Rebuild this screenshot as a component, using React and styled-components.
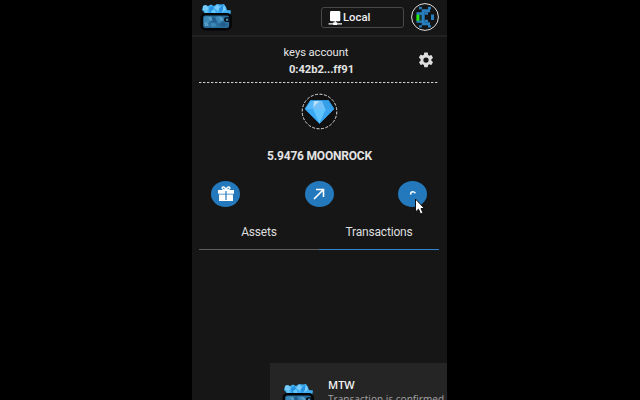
import React from 'react';
import styled, { createGlobalStyle } from 'styled-components';

const GlobalStyle = createGlobalStyle`
  * { box-sizing: border-box; }
  body { margin: 0; background: #000; overflow: hidden; }
`;

const Screen = styled.div`
  position: relative;
  width: 640px;
  height: 400px;
  overflow: hidden;
  background: #000;
  padding-left: 192px;
  font-family: Roboto, sans-serif;
  color: #e4e4e4;
`;

const Panel = styled.main`
  width: 255px;
  height: 400px;
  background: #161616;
  display: flex;
  flex-direction: column;
`;

const Header = styled.header`
  display: flex;
  align-items: center;
  height: 37px;
  padding: 0 8px 2px 7px;
  border-bottom: 2px solid #222;
`;

const NetworkSelect = styled.button`
  display: flex;
  align-items: center;
  width: 83px;
  height: 21px;
  margin: 1px 7px 0 auto;
  padding: 0 0 0 6px;
  border: 1px solid #484848;
  border-radius: 3px;
  background: transparent;
  color: #eee;
  font: 500 11.3px Roboto, sans-serif;
  gap: 0;
`;

const Avatar = styled.svg`
  display: block;
  width: 28px;
  height: 28px;
`;

const Account = styled.section`
  display: grid;
  grid-template-columns: 1fr 18px;
  align-items: center;
  height: 45px;
  margin: 0 7px;
  padding-right: 5px;
`;

const AccountText = styled.div`
  display: flex;
  flex-direction: column;
  align-items: center;
  font-size: 11.2px;
  letter-spacing: -0.05px;
  line-height: 17px;
  padding: 3px 0 0 16px;
`;

const Address = styled.strong`
  font-weight: 700;
  font-size: 11.2px;
  padding-left: 11px;
`;

const Divider = styled.svg`
  display: block;
  width: 240px;
  height: 1px;
  margin-left: 7px;
`;

const Balance = styled.section`
  display: flex;
  flex-direction: column;
  align-items: center;
  height: 98px;
  padding-top: 10px;
`;

const TokenIcon = styled.svg`
  width: 37px;
  height: 37px;
`;

const Amount = styled.div`
  margin-top: 17px;
  font-size: 12px;
  letter-spacing: -0.2px;
  line-height: 18px;
  font-weight: 700;
  white-space: nowrap;
`;

const Actions = styled.nav`
  display: flex;
  justify-content: space-between;
  padding: 0 20px 0 19px;
`;

const ActionButton = styled.button`
  display: grid;
  place-items: center;
  width: 29px;
  height: 26px;
  padding: 0;
  border: 0;
  border-radius: 50%;
  background: #2379bb;
`;

const Tabs = styled.nav`
  display: flex;
  margin: 13px 0 0 7px;
`;

const Tab = styled.button`
  width: 120px;
  height: 30px;
  padding: 0 0 5px;
  border: 0;
  border-bottom: 1px solid ${({ $active }) => ($active ? '#2f86cf' : '#5e5e5e')};
  background: transparent;
  color: #dedede;
  font: 400 12px Roboto, sans-serif;
  letter-spacing: -0.18px;
`;

const Toast = styled.aside`
  position: absolute;
  left: 270px;
  top: 363px;
  width: 177px;
  height: 60px;
  display: flex;
  gap: 13px;
  padding: 14px 0 0 11px;
  background: #252525;
  overflow: hidden;
`;

const ToastBody = styled.div`
  white-space: nowrap;
`;

const ToastTitle = styled.div`
  font: 600 11px/15px 'Open Sans', sans-serif;
  color: #f4f4f4;
`;

const ToastMessage = styled.div`
  font: 400 10.1px/14px 'Open Sans', sans-serif;
  color: #a2a2a2;
`;

const WalletSvg = styled.svg`
  display: block;
  flex: none;
  width: 34px;
  height: 30px;
  margin-top: ${({ $top }) => $top || 0}px;
`;

const Pointer = styled.svg`
  position: absolute;
  left: 414px;
  top: 198px;
  width: 11px;
  height: 17px;
`;

function WalletLogo({ top }) {
  return (
    <WalletSvg $top={top} viewBox="0 0 34 30">
      <path d="M4 4 6 3 9 4 12 2.5 15 4 18 2 22 2.5 25 2 27 5 28 8 32 8.5 31 14H6L5 10 3 8Z" fill="#3fadf0" />
      <path d="M4 4 7 3 10 6 8 9 4 8ZM15 6 18 2.5 21 5 19 9ZM23 5 26 4 27 8 23 10Z" fill="#78cafa" />
      <path d="M10 6 14 4 15 9 11 12ZM20 7 24 3 24 8 21 11Z" fill="#2590df" />
      <path d="M12 9 15 7 17 11 13 12ZM5 9 9 9 8 12Z" fill="#65c4f8" />
      <rect x="2.8" y="12.2" width="28.7" height="15" rx="3.5" fill="#286d9b" stroke="#030506" strokeWidth="2.6" />
      <path d="M5 15 9 14 12 17 10 21 5 21ZM16 15 21 14 24 18 20 22ZM11 22 15 20 18 24 13 25Z" fill="#3b88b6" />
      <path d="M9 15 12 14.5 14 18 11 19ZM20 15 23 15 25 18 22 19ZM5 21 8 20 10 24 6 24Z" fill="#559fc6" />
      <path d="M13 16 16 15 17 20 14 21ZM20 22 25 20 28 23 24 25Z" fill="#235d8b" />
      <path d="M31 15.2H27Q25 15.2 25 17.5T27 20H31Z" fill="#071018" />
      <rect x="27" y="16.6" width="2.2" height="2.2" fill="#4a91b7" />
    </WalletSvg>
  );
}

export default function App() {
  return (
    <>
      <GlobalStyle />
      <Screen>
        <Panel>
          <Header>
            <WalletLogo />
            <NetworkSelect>
              <svg width="15" height="15" viewBox="0 0 15 15">
                <rect x="2" y="1" width="10.3" height="10.3" rx="1.2" fill="#fff" />
                <path d="M7.2 10v3M.5 13.8H14" stroke="#fff" strokeWidth="1.2" />
                <rect x="5.2" y="12.3" width="4" height="2.7" fill="#fff" />
              </svg>
              Local
            </NetworkSelect>
            <Avatar viewBox="0 0 28 28">
              <circle cx="14" cy="14" r="13.4" fill="#151515" stroke="#dedede" strokeWidth="1" />
              <path d="M8 3.7h2.8v2.6H8zM17 3.7h3v2.6h-3zM10.7 6.3H19v3h-5.3v9.9H19v3h-8.3v-2.4H5.5v-2.6H8V12H5.5V9.3h5.2zM20 11.5h3V17h-3zM8 22.3h2.8v2.2H8zM17 22.3h3v2.2h-3z" fill="#277fbf" />
              <path d="M13.7 9.3H17v2.5h-3.3zM13.7 16.8H17v2.5h-3.3z" fill="#277fbf" />
              <path d="M5.4 11.7h3v6h-3z" fill="#25ed0b" />
              <path d="M8.4 11.7h2.3v6H8.4z" fill="#143b2a" />
            </Avatar>
          </Header>
          <Account>
            <AccountText>
              <span>keys account</span>
              <Address>0:42b2...ff91</Address>
            </AccountText>
            <svg width="18" height="18" viewBox="0 0 24 24" fill="#dedede">
              <path d="M19.14 12.94c.04-.3.06-.61.06-.94s-.02-.64-.07-.94l2.03-1.58a.49.49 0 0 0 .12-.61l-1.92-3.32a.49.49 0 0 0-.59-.22l-2.39.96a7.03 7.03 0 0 0-1.62-.94l-.36-2.54A.48.48 0 0 0 13.92 2h-3.84a.48.48 0 0 0-.48.41l-.36 2.54c-.59.24-1.13.57-1.62.94l-2.39-.96a.49.49 0 0 0-.59.22L2.72 8.47a.49.49 0 0 0 .12.61l2.03 1.98c-.05.3-.07.62-.07.94s.02.64.07.94l-2.03 1.58a.49.49 0 0 0-.12.61l1.92 3.32c.12.22.37.29.59.22l2.39-.96c.5.38 1.03.7 1.62.94l.36 2.54c.05.24.24.41.48.41h3.84c.24 0 .44-.17.48-.41l.36-2.54c.59-.24 1.13-.56 1.62-.94l2.39.96c.22.08.47 0 .59-.22l1.92-3.32a.49.49 0 0 0-.12-.61ZM12 15.5a3.5 3.5 0 1 1 0-7 3.5 3.5 0 0 1 0 7Z" />
            </svg>
          </Account>
          <Divider viewBox="0 0 240 1">
            <path d="M0 .5H240" stroke="#d0d0d0" strokeDasharray="2.4 1.6" />
          </Divider>
          <Balance>
            <TokenIcon viewBox="0 0 37 37">
              <circle cx="18.5" cy="18.5" r="17.3" fill="#101010" stroke="#ddd" strokeWidth="1" strokeDasharray="3 1.5" />
              <path d="M9.5 7.5H27.5L33 16 18.5 30.5 4 16Z" fill="#39a9f4" />
              <path d="M9.5 7.5 4 16H12L15 7.5Z" fill="#55b9fb" />
              <path d="M15 7.5 12 16H24.5L21 7.5Z" fill="#72c0f5" />
              <path d="M13 8 12 14.5 18.5 8Z" fill="#b9def8" />
              <path d="M21 7.5 24.5 16H33L27.5 7.5Z" fill="#369fe9" />
              <path d="M12 16H25L18.5 30.5Z" fill="#60c4ff" />
              <path d="M25 16H33L18.5 30.5Z" fill="#3aa2ee" />
              <path d="M9.5 7.5H27.5L33 16 18.5 30.5 4 16Z" fill="none" stroke="#2894dc" strokeWidth=".9" />
            </TokenIcon>
            <Amount>5.9476 MOONROCK</Amount>
          </Balance>
          <Actions>
            <ActionButton>
              <svg width="16" height="16" viewBox="0 0 16 16">
                <path d="M0 4h16v3.8H0zM1 8.4h14V15H1z" fill="#fff" />
                <path d="M8 4C2 4 4-1 7 2L8 4 9 2C12-1 14 4 8 4Z" fill="none" stroke="#fff" strokeWidth="1.4" />
                <path d="M8 5v9" stroke="#2379bb" strokeWidth="1.2" />
              </svg>
            </ActionButton>
            <ActionButton>
              <svg width="14" height="14" viewBox="0 0 14 14">
                <path d="M2 12 11.5 2.5M4 2.5h7.5V10" fill="none" stroke="#fff" strokeWidth="1.6" />
              </svg>
            </ActionButton>
            <ActionButton>
              <svg width="10" height="10" viewBox="0 0 10 10">
                <path d="M2.8 5.6C2.2 2.3 5.8 2 7.4 4.3" fill="none" stroke="#eef8ff" strokeWidth="1.6" />
              </svg>
            </ActionButton>
          </Actions>
          <Tabs>
            <Tab>Assets</Tab>
            <Tab $active>Transactions</Tab>
          </Tabs>
        </Panel>
        <Toast>
          <WalletLogo top={5} />
          <ToastBody>
            <ToastTitle>MTW</ToastTitle>
            <ToastMessage>Transaction is confirmed</ToastMessage>
          </ToastBody>
        </Toast>
        <Pointer viewBox="0 0 11 17">
          <path d="M1.5 1V14L4.5 11.2 6.5 16 9 15 7 10.5H10.5Z" fill="#fff" stroke="#111" strokeWidth="1" />
        </Pointer>
      </Screen>
    </>
  );
}
